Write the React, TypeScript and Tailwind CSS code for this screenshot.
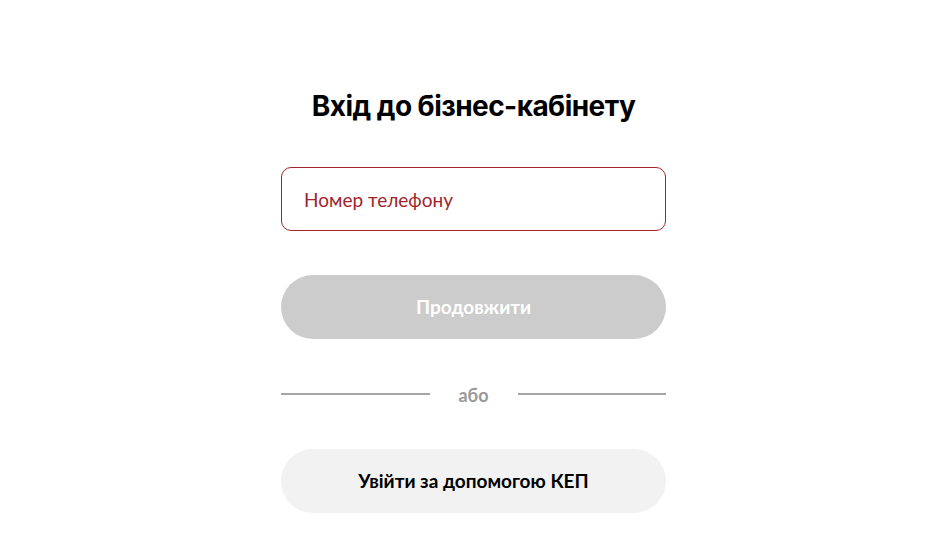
export default function App() {
  return (
    <div className="min-h-screen bg-white flex justify-center font-['Lato','Noto_Sans',sans-serif]">
      <div className="w-[385px] pt-[87px] flex flex-col">
        <h1 className="text-center text-[28px] leading-[38px] font-bold text-black font-['Inter',sans-serif] tracking-[-0.55px]">
          Вхід до бізнес-кабінету
        </h1>
        <div className="mt-[42px] h-[64px] rounded-[10px] border border-[#a5232b] flex items-center px-[22px] pt-[2px]">
          <span className="text-[19px] text-[#a1232b]">Номер телефону</span>
        </div>
        <button className="mt-[44px] h-[64px] rounded-full bg-[#cccccc] text-white text-[19px] font-bold">
          Продовжити
        </button>
        <div className="mt-[41px] flex items-center">
          <div className="flex-1 h-[2px] bg-[#a6a6a6]" />
          <span className="w-[88px] text-center text-[18px] font-bold text-[#999999] translate-y-[2px]">або</span>
          <div className="flex-1 h-[2px] bg-[#a6a6a6]" />
        </div>
        <button className="mt-[42px] h-[64px] rounded-full bg-[#f2f2f2] text-black text-[19px] font-bold">
          Увійти за допомогою КЕП
        </button>
      </div>
    </div>
  );
}
